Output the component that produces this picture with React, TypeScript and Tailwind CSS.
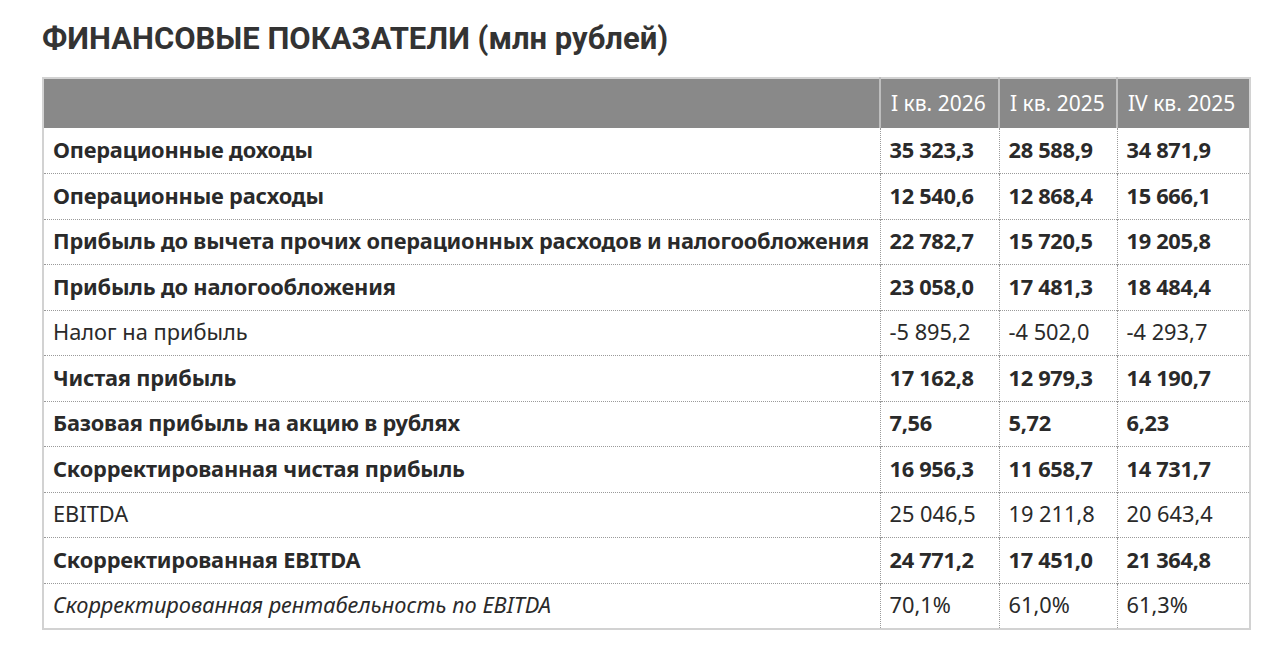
const rows: { label: string; values: string[]; kind: "bold" | "normal" | "italic" }[] = [
  { label: "Операционные доходы", values: ["35 323,3", "28 588,9", "34 871,9"], kind: "bold" },
  { label: "Операционные расходы", values: ["12 540,6", "12 868,4", "15 666,1"], kind: "bold" },
  {
    label: "Прибыль до вычета прочих операционных расходов и налогообложения",
    values: ["22 782,7", "15 720,5", "19 205,8"],
    kind: "bold",
  },
  { label: "Прибыль до налогообложения", values: ["23 058,0", "17 481,3", "18 484,4"], kind: "bold" },
  { label: "Налог на прибыль", values: ["-5 895,2", "-4 502,0", "-4 293,7"], kind: "normal" },
  { label: "Чистая прибыль", values: ["17 162,8", "12 979,3", "14 190,7"], kind: "bold" },
  { label: "Базовая прибыль на акцию в рублях", values: ["7,56", "5,72", "6,23"], kind: "bold" },
  { label: "Скорректированная чистая прибыль", values: ["16 956,3", "11 658,7", "14 731,7"], kind: "bold" },
  { label: "EBITDA", values: ["25 046,5", "19 211,8", "20 643,4"], kind: "normal" },
  { label: "Скорректированная EBITDA", values: ["24 771,2", "17 451,0", "21 364,8"], kind: "bold" },
  { label: "Скорректированная рентабельность по EBITDA", values: ["70,1%", "61,0%", "61,3%"], kind: "italic" },
];

const periods = ["I кв. 2026", "I кв. 2025", "IV кв. 2025"];

export default function App() {
  return (
    <div className="min-h-[653px] bg-white px-[42px] pt-[21px] font-['Noto_Sans',sans-serif] text-[#2a2a2a]">
      <h1 className="mb-[20px] h-[36px] font-['Roboto',sans-serif] text-[31px] leading-[36px] font-bold text-[#333]">
        ФИНАНСОВЫЕ ПОКАЗАТЕЛИ (млн рублей)
      </h1>
      <table className="w-[1207px] table-fixed border-collapse border-2 border-[#d2d2d2]">
        <colgroup>
          <col className="w-[837px]" />
          <col className="w-[119px]" />
          <col className="w-[118px]" />
          <col className="w-[133px]" />
        </colgroup>
        <thead>
          <tr className="h-[50px] bg-[#898989] text-white">
            <th className="border-r-2 border-[#bdbdbd]" />
            {periods.map((p, i) => (
              <th
                key={p}
                className={
                  "px-[10px] text-left font-['Noto_Sans',sans-serif] text-[21px] font-normal whitespace-nowrap " +
                  (i < 2 ? "border-r-2 border-[#bdbdbd]" : "")
                }
              >
                {p}
              </th>
            ))}
          </tr>
        </thead>
        <tbody>
          {rows.map((r) => (
            <tr key={r.label} className="h-[45.5px] border-b border-dotted border-[#9a9a9a] last:border-b-0">
              <td
                className={
                  "border-r border-dotted border-[#9a9a9a] px-[9px] text-[21.8px] whitespace-nowrap " +
                  (r.kind === "bold" ? "font-bold tracking-[-0.2px]" : r.kind === "italic" ? "italic" : "")
                }
              >
                {r.label}
              </td>
              {r.values.map((v, i) => (
                <td
                  key={i}
                  className={
                    "px-[9px] text-[21.8px] whitespace-nowrap " +
                    (i < 2 ? "border-r border-dotted border-[#9a9a9a] " : "") +
                    (r.kind === "bold" ? "font-bold tracking-[-0.3px]" : "")
                  }
                >
                  {v}
                </td>
              ))}
            </tr>
          ))}
        </tbody>
      </table>
    </div>
  );
}
